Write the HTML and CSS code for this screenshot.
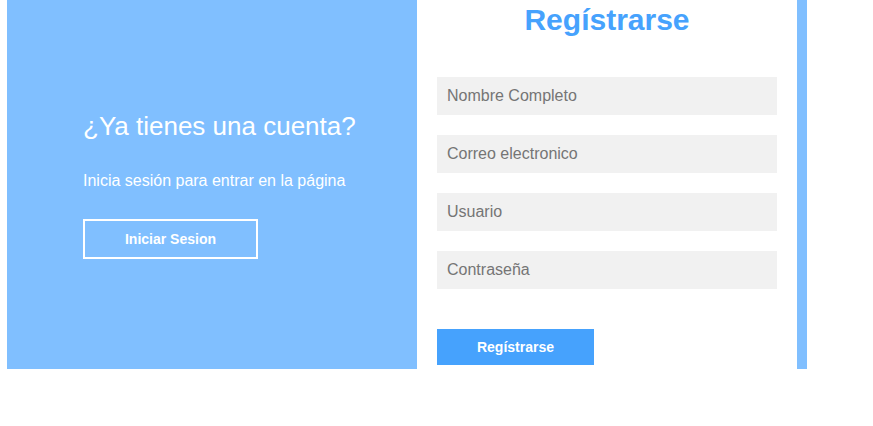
FILE: index.html
```html
<!DOCTYPE html>
<html lang="es">
<head>
<meta charset="utf-8">
<title>Registrarse</title>
<link rel="stylesheet" href="styles.css">
</head>
<body>
<div class="container">
  <section class="intro">
    <h2 class="intro-title">¿Ya tienes una cuenta?</h2>
    <p class="intro-text">Inicia sesión para entrar en la página</p>
    <button class="btn-outline" type="button">Iniciar Sesion</button>
  </section>
  <section class="panel">
    <h1 class="panel-title">Regístrarse</h1>
    <form class="form">
      <input class="field" type="text" placeholder="Nombre Completo">
      <input class="field" type="email" placeholder="Correo electronico">
      <input class="field" type="text" placeholder="Usuario">
      <input class="field" type="password" placeholder="Contraseña">
      <button class="btn-primary" type="button">Regístrarse</button>
    </form>
  </section>
</div>
</body>
</html>
```
FILE: styles.css
```css
* { box-sizing: border-box; }
body {
  margin: 0;
  font-family: "Liberation Sans", Arial, sans-serif;
  background: #fff;
}
.container {
  margin-left: 7px;
  width: 800px;
  height: 369px;
  background: #80bfff;
  display: flex;
}
.intro {
  width: 410px;
  padding: 111px 0 0 76px;
  color: #fff;
}
.intro-title {
  margin: 0;
  font-size: 26px;
  font-weight: normal;
  line-height: 30px;
}
.intro-text {
  margin: 31px 0 0;
  font-size: 16px;
  line-height: 18px;
}
.btn-outline {
  margin-top: 29px;
  width: 175px;
  height: 40px;
  border: 2px solid #fff;
  background: transparent;
  color: #fff;
  font-family: inherit;
  font-weight: bold;
  font-size: 14px;
  padding: 0;
}
.panel {
  width: 380px;
  background: #fff;
  padding: 0 20px;
}
.panel-title {
  margin: 0;
  height: 77px;
  padding-top: 3px;
  text-align: center;
  color: #46a2fd;
  font-size: 30px;
  line-height: 34px;
  font-weight: bold;
}
.form {
  display: flex;
  flex-direction: column;
  gap: 20px;
}
.field {
  width: 340px;
  height: 38px;
  border: none;
  background: #f1f1f1;
  padding: 0 10px;
  font-family: inherit;
  font-size: 16px;
  color: #333;
  outline: none;
}
.field::placeholder { color: #757575; }
.btn-primary {
  margin-top: 20px;
  width: 157px;
  height: 36px;
  border: none;
  background: #46a2fd;
  color: #fff;
  font-family: inherit;
  font-weight: bold;
  font-size: 14px;
  padding: 0;
}
```
